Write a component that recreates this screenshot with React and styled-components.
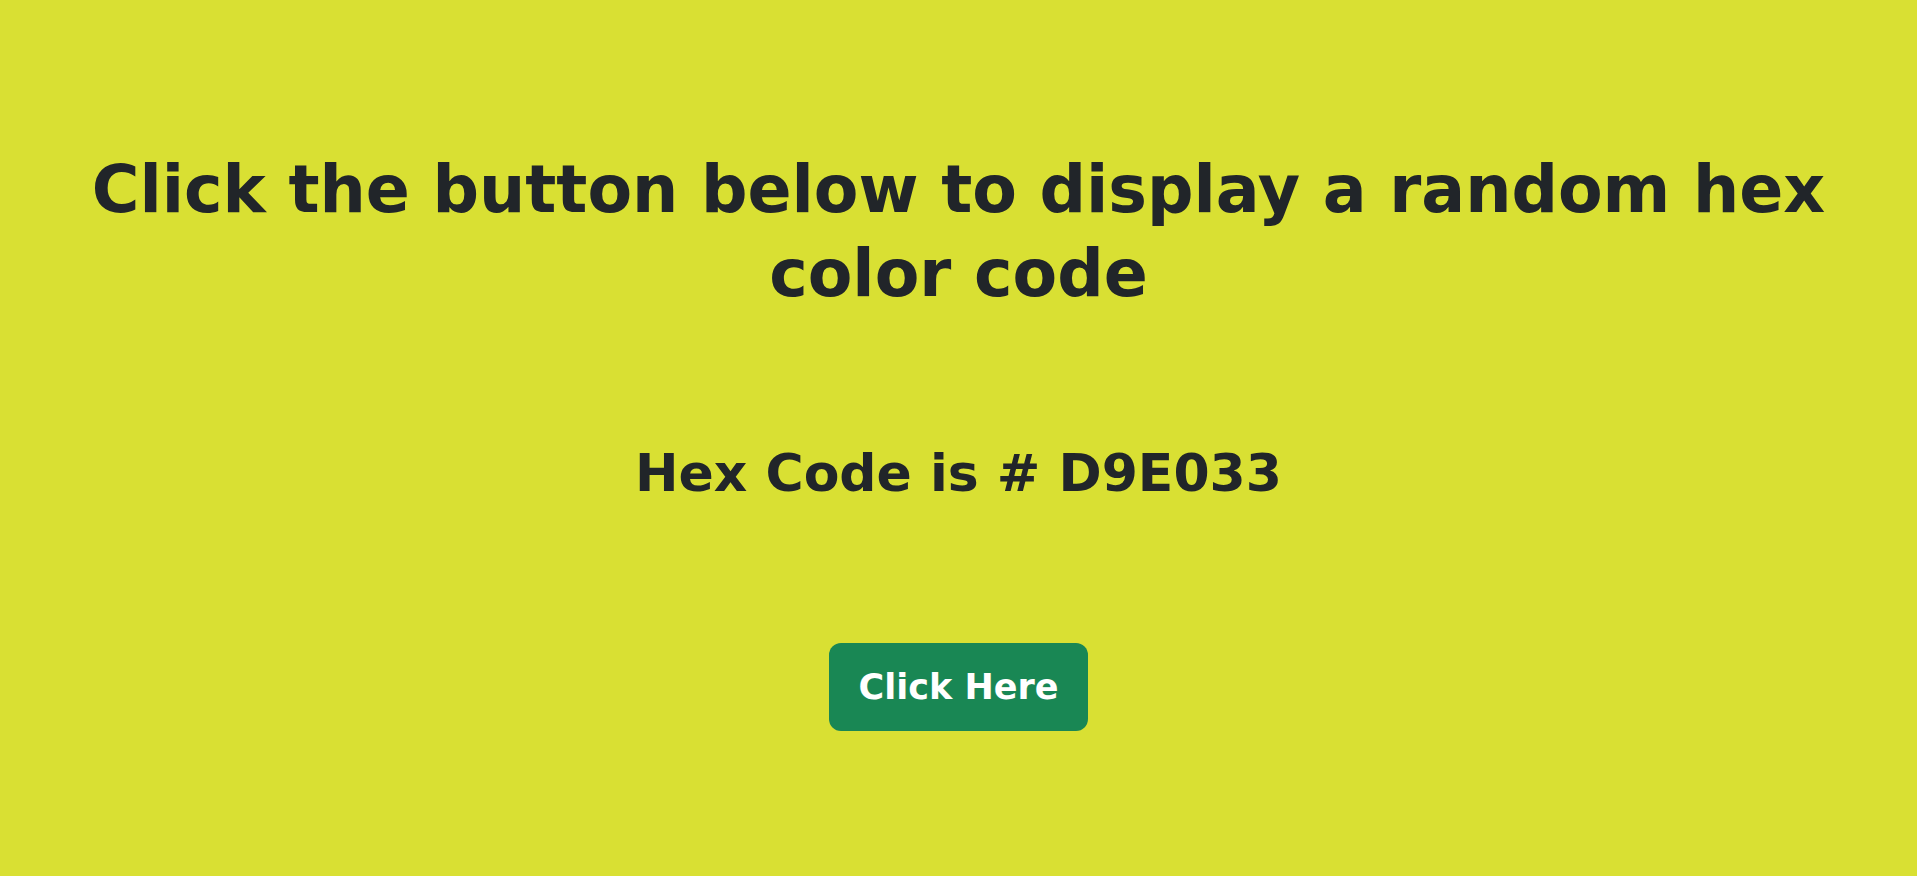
import React, { useState } from "react";
import styled, { createGlobalStyle } from "styled-components";

const GlobalStyle = createGlobalStyle`
  html, body {
    margin: 0;
    padding: 0;
  }
  body {
    background: ${(p) => p.$bg};
    font-family: "DejaVu Sans", "Noto Sans", sans-serif;
    color: #212529;
  }
`;

const Page = styled.main`
  min-height: 100vh;
  box-sizing: border-box;
  display: flex;
  flex-direction: column;
  align-items: center;
  padding: 148px 60px 0;
  background: ${(p) => p.$bg};
`;

const Title = styled.h1`
  margin: 0;
  font-size: 65px;
  line-height: 84px;
  font-weight: 700;
  text-align: center;
  color: #212529;
`;

const HexLine = styled.h2`
  margin: 126px 0 0;
  font-size: 52px;
  line-height: 62px;
  font-weight: 700;
  text-align: center;
  color: #212529;
`;

const Button = styled.button`
  margin-top: 139px;
  padding: 18px 30px;
  border: none;
  border-radius: 12px;
  background: #198754;
  color: #ffffff;
  font-family: "DejaVu Sans", "Noto Sans", sans-serif;
  font-size: 35px;
  line-height: 52px;
  font-weight: 700;
  cursor: pointer;
`;

const randomHex = () =>
  Math.floor(Math.random() * 0xffffff)
    .toString(16)
    .padStart(6, "0")
    .toUpperCase();

export default function App() {
  const [hex, setHex] = useState("D9E033");
  const bg = `#${hex}`;
  return (
    <>
      <GlobalStyle $bg={bg} />
      <Page $bg={bg}>
        <Title>Click the button below to display a random hex color code</Title>
        <HexLine>Hex Code is # {hex}</HexLine>
        <Button onClick={() => setHex(randomHex())}>Click Here</Button>
      </Page>
    </>
  );
}
